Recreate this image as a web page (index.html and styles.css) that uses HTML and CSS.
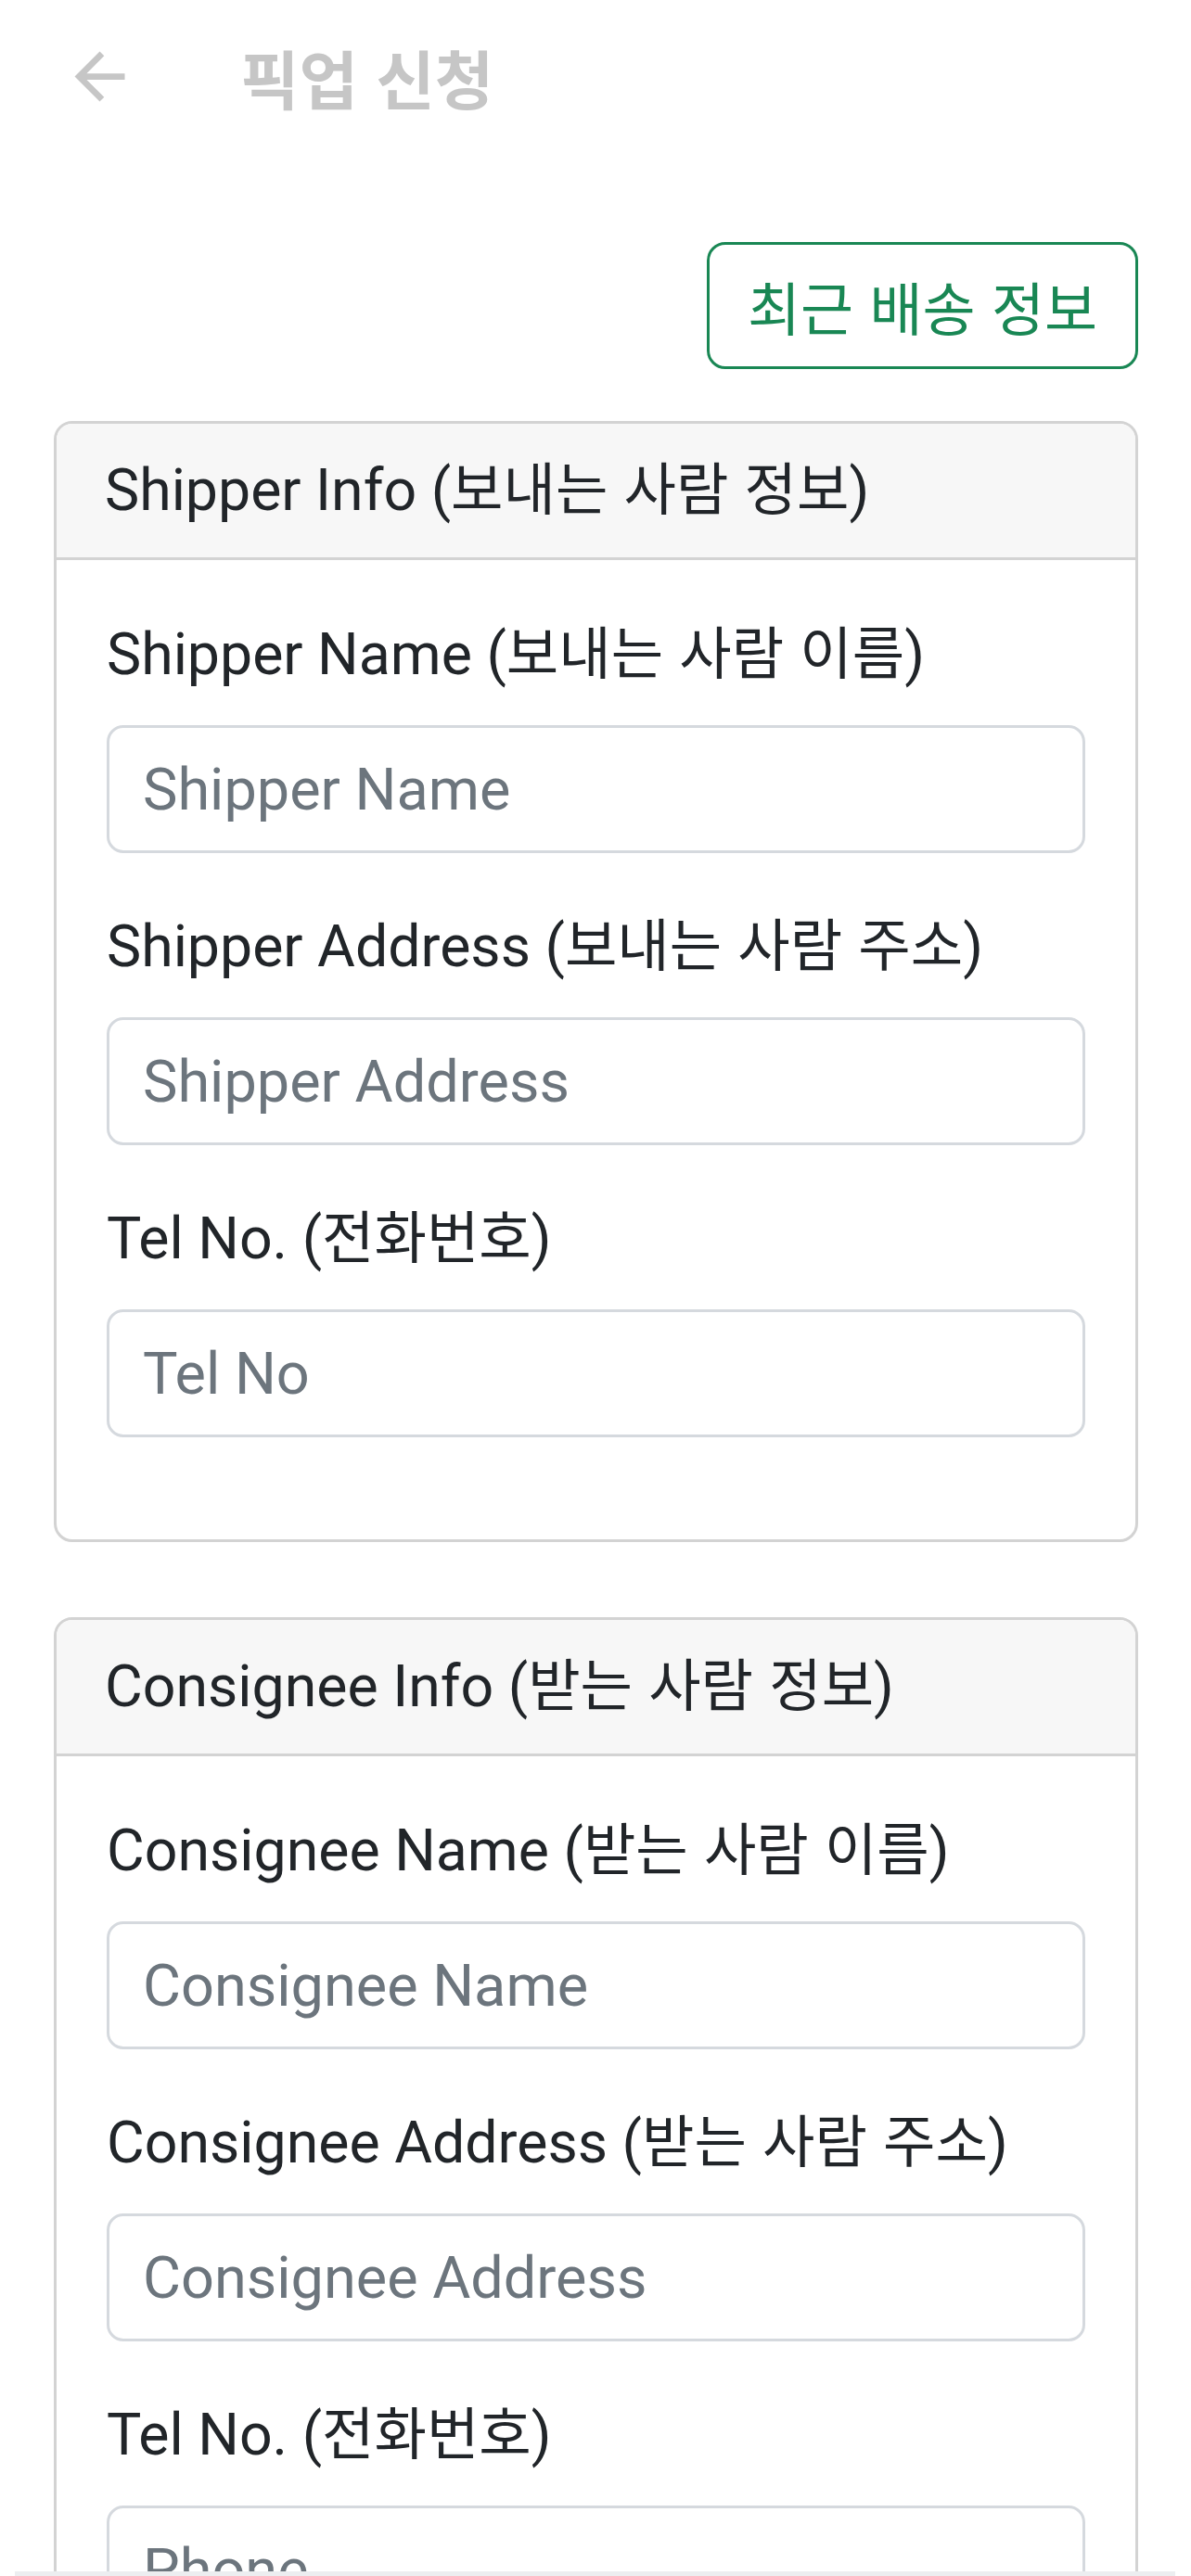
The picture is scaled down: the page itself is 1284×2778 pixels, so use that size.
FILE: index.html
```html
<!DOCTYPE html>
<html lang="ko">
<head>
<meta charset="utf-8">
<title>픽업 신청</title>
<link rel="stylesheet" href="styles.css">
</head>
<body>
<div class="page">
  <header class="topbar">
    <svg class="back" viewBox="0 0 24 24" aria-hidden="true"><path d="M20 11H7.83l5.59-5.59L12 4l-8 8 8 8 1.41-1.41L7.83 13H20v-2z"/></svg>
    <h1 class="title">픽업 신청</h1>
  </header>
  <main class="content">
    <div class="actions">
      <button class="btn-recent" type="button">최근 배송 정보</button>
    </div>

    <section class="card">
      <div class="card-header">Shipper Info (<span class="ko">보내는 사람 정보</span>)</div>
      <div class="card-body">
        <div class="field">
          <label class="label">Shipper Name (<span class="ko">보내는 사람 이름</span>)</label>
          <input class="input" type="text" placeholder="Shipper Name">
        </div>
        <div class="field">
          <label class="label">Shipper Address (<span class="ko">보내는 사람 주소</span>)</label>
          <input class="input" type="text" placeholder="Shipper Address">
        </div>
        <div class="field">
          <label class="label">Tel No. (<span class="ko">전화번호</span>)</label>
          <input class="input" type="text" placeholder="Tel No">
        </div>
      </div>
    </section>

    <section class="card">
      <div class="card-header">Consignee Info (<span class="ko">받는 사람 정보</span>)</div>
      <div class="card-body">
        <div class="field">
          <label class="label">Consignee Name (<span class="ko">받는 사람 이름</span>)</label>
          <input class="input" type="text" placeholder="Consignee Name">
        </div>
        <div class="field">
          <label class="label">Consignee Address (<span class="ko">받는 사람 주소</span>)</label>
          <input class="input" type="text" placeholder="Consignee Address">
        </div>
        <div class="field">
          <label class="label">Tel No. (<span class="ko">전화번호</span>)</label>
          <input class="input" type="text" placeholder="Phone">
        </div>
      </div>
    </section>
  </main>
</div>
<div class="bottom-bar"></div>
</body>
</html>
```

FILE: styles.css
```css
html, body {
  margin: 0;
  padding: 0;
  background: #ffffff;
}

body {
  height: 100vh;
  overflow: hidden;
  font-family: Roboto, "Noto Sans CJK KR", sans-serif;
  color: #212529;
}

.page {
  height: 100vh;
  overflow: hidden;
}

.topbar {
  height: 165px;
  display: flex;
  align-items: center;
  padding-left: 67px;
}

.back {
  width: 81px;
  height: 81px;
  fill: #c6c6c6;
  flex: none;
}

.title {
  margin: 0 0 0 111px;
  padding-top: 2px;
  font-family: "Noto Sans CJK KR", sans-serif;
  font-weight: 700;
  font-size: 69px;
  line-height: 1;
  color: #c6c6c6;
}

.content {
  padding: 0 57px 0 58px;
}

.actions {
  display: flex;
  justify-content: flex-end;
  margin-top: 96px;
}

.btn-recent {
  box-sizing: border-box;
  height: 137px;
  padding: 0 41px;
  border: 3px solid #198754;
  border-radius: 20px;
  background: #ffffff;
  color: #198754;
  font-family: "Noto Sans CJK KR", sans-serif;
  font-weight: 400;
  font-size: 62px;
  line-height: 1;
}

.card {
  margin-top: 56px;
  border: 3px solid #d3d3d3;
  border-radius: 20px;
  overflow: hidden;
  background: #ffffff;
}

.card + .card {
  margin-top: 81px;
}

.card-header {
  background: #f7f7f7;
  border-bottom: 3px solid #d3d3d3;
  padding: 26px 52px;
  font-size: 62.6px;
  line-height: 92px;
  color: #212529;
}

.ko {
  font-family: "Noto Sans CJK KR", sans-serif;
  font-size: 0.98em;
  line-height: 1;
}

.card-body {
  padding: 56px 54px 55px 54px;
}

.field {
  margin-bottom: 55px;
}

.label {
  display: block;
  margin-bottom: 30px;
  font-size: 62.6px;
  line-height: 92px;
  color: #212529;
}

.input {
  display: block;
  box-sizing: border-box;
  width: 100%;
  height: 138px;
  margin: 0;
  padding: 0 36px;
  border: 3px solid #d5d9de;
  border-radius: 18px;
  background: #ffffff;
  font-family: Roboto, sans-serif;
  font-size: 63px;
  color: #212529;
  outline: none;
}

.input::placeholder {
  color: #6c757d;
  opacity: 1;
}

.bottom-bar {
  position: fixed;
  left: 16px;
  right: 17px;
  bottom: 0;
  height: 5px;
  background: #eceef0;
}
```
